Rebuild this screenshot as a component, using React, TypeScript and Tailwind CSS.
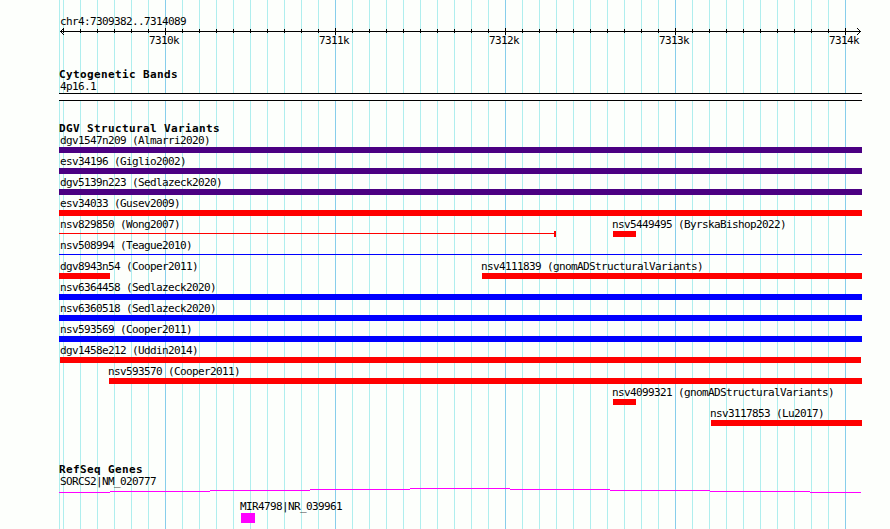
const REGION = { left: 59, width: 803 };

// pixel offsets are measured from the left edge of the region
const MAJOR = [106, 276, 446, 616, 786];
const MINOR = Array.from({ length: 47 }, (_, i) => 4 + i * 17).filter((x) => !MAJOR.includes(x));

type Feature = {
  name: string;
  start: number;
  width: number;
  color: string;
  kind?: "line" | "capped";
};

const INDIGO = "bg-[#4b0082]";
const RED = "bg-[#ff0000]";
const BLUE = "bg-[#0000ff]";

const VARIANTS: Feature[][] = [
  [{ name: "dgv1547n209 (Almarri2020)", start: 0, width: 803, color: INDIGO }],
  [{ name: "esv34196 (Giglio2002)", start: 0, width: 803, color: INDIGO }],
  [{ name: "dgv5139n223 (Sedlazeck2020)", start: 0, width: 803, color: INDIGO }],
  [{ name: "esv34033 (Gusev2009)", start: 0, width: 803, color: RED }],
  [
    { name: "nsv829850 (Wong2007)", start: 0, width: 497, color: RED, kind: "capped" },
    { name: "nsv5449495 (ByrskaBishop2022)", start: 554, width: 23, color: RED },
  ],
  [{ name: "nsv508994 (Teague2010)", start: 0, width: 803, color: BLUE, kind: "line" }],
  [
    { name: "dgv8943n54 (Cooper2011)", start: 0, width: 51, color: RED },
    { name: "nsv4111839 (gnomADStructuralVariants)", start: 423, width: 380, color: RED },
  ],
  [{ name: "nsv6364458 (Sedlazeck2020)", start: 0, width: 803, color: BLUE }],
  [{ name: "nsv6360518 (Sedlazeck2020)", start: 0, width: 803, color: BLUE }],
  [{ name: "nsv593569 (Cooper2011)", start: 0, width: 803, color: BLUE }],
  [{ name: "dgv1458e212 (Uddin2014)", start: 1, width: 801, color: RED }],
  [{ name: "nsv593570 (Cooper2011)", start: 50, width: 753, color: RED }],
  [{ name: "nsv4099321 (gnomADStructuralVariants)", start: 554, width: 23, color: RED }],
  [{ name: "nsv3117853 (Lu2017)", start: 652, width: 151, color: RED }],
];

// intron of SORCS2, drawn as flat steps: [start, end, y]
const STEPS = [
  [0, 51, 4],
  [51, 151, 3],
  [151, 251, 2],
  [251, 351, 1],
  [351, 451, 0],
  [451, 551, 1],
  [551, 651, 2],
  [651, 751, 3],
  [751, 802, 4],
];

const label = "block h-3 whitespace-pre text-[11px] leading-3 tracking-[-0.622px]";
const title = "h-3 whitespace-pre text-[11px] font-bold leading-[14px] tracking-[0.378px]";

function Gridlines() {
  return (
    <svg className="absolute inset-0" width={REGION.width} height={529} shapeRendering="crispEdges">
      <rect x={0} y={0} width={1} height={529} fill="#afeeee" />
      {MINOR.map((x) => (
        <rect key={x} x={x} y={0} width={1} height={529} fill="#afeeee" />
      ))}
      {MAJOR.map((x) => (
        <rect key={x} x={x} y={0} width={1} height={529} fill="#87ceeb" />
      ))}
    </svg>
  );
}

function Ruler() {
  return (
    <svg className="block" width={REGION.width} height={7} shapeRendering="crispEdges">
      <rect x={1} y={3} width={801} height={1} />
      {MINOR.map((x) => (
        <rect key={x} x={x} y={1} width={1} height={4} />
      ))}
      {MAJOR.map((x) => (
        <rect key={x} x={x} y={0} width={1} height={7} />
      ))}
      {[1, 2, 3].map((d) => (
        <g key={d}>
          <rect x={1 + d} y={3 - d} width={1} height={1} />
          <rect x={1 + d} y={3 + d} width={1} height={1} />
          <rect x={801 - d} y={3 - d} width={1} height={1} />
          <rect x={801 - d} y={3 + d} width={1} height={1} />
        </g>
      ))}
    </svg>
  );
}

function Glyph({ feature }: { feature: Feature }) {
  const { width, color, kind } = feature;
  if (kind === "line") {
    return (
      <div className="flex h-1.5 items-start pt-[2px]" style={{ width }}>
        <div className={`h-px w-full ${color}`} />
      </div>
    );
  }
  if (kind === "capped") {
    return (
      <div className="flex h-1.5" style={{ width }}>
        <div className={`mt-[2px] h-px flex-1 ${color}`} />
        <div className={`h-full w-[2px] ${color}`} />
      </div>
    );
  }
  return <div className={`h-1.5 ${color}`} style={{ width }} />;
}

function Row({ features }: { features: Feature[] }) {
  return (
    <div className="grid h-[21px] grid-cols-[803px]">
      {features.map((f) => (
        <div key={f.name} className="col-start-1 row-start-1" style={{ marginLeft: f.start }}>
          <span className={`${label} ${f.start === 1 ? "" : f.start === 0 ? "pl-px" : "-ml-px"}`}>{f.name}</span>
          <Glyph feature={f} />
        </div>
      ))}
    </div>
  );
}

export default function App() {
  return (
    <main className="h-[529px] w-[890px] overflow-hidden bg-[#fdfffc] pl-[59px] font-['DejaVu_Sans_Mono',monospace] text-black">
      <div className="relative h-full w-[803px]">
        <Gridlines />
        <div className="relative pt-4">
          <header>
            <span className={`${label} pl-px`}>chr4:7309382..7314089</span>
            <Ruler />
            <div className="grid h-[33px] grid-cols-[803px]">
              {MAJOR.map((x, i) => (
                <span key={x} className={`${label} col-start-1 row-start-1`} style={{ marginLeft: x - 16 }}>
                  {`${7310 + i}k`}
                </span>
              ))}
            </div>
          </header>

          <section className="h-[54px]">
            <h2 className={title}>Cytogenetic Bands</h2>
            <div className="pt-px">
              <span className={`${label} pl-px`}>4p16.1</span>
              <div className="h-2 border-y border-black bg-white" />
            </div>
          </section>

          <section className="h-[341px]">
            <h2 className={`${title} mb-px`}>DGV Structural Variants</h2>
            {VARIANTS.map((features) => (
              <Row key={features[0].name} features={features} />
            ))}
          </section>

          <section>
            <h2 className={`${title} mb-px`}>RefSeq Genes</h2>
            <span className={`${label} pl-px`}>SORCS2|NM_020777</span>
            <svg className="block" width={REGION.width} height={5} shapeRendering="crispEdges">
              {STEPS.map(([from, to, y]) => (
                <rect key={from} x={from} y={y} width={to - from} height={1} fill="#ff00ff" />
              ))}
            </svg>
            <div className="mt-2 ml-[182px]">
              <span className={`${label} -ml-px`}>MIR4798|NR_039961</span>
              <div className="h-2.5 w-3.5 bg-[#ff00ff]" />
            </div>
          </section>
        </div>
      </div>
    </main>
  );
}
